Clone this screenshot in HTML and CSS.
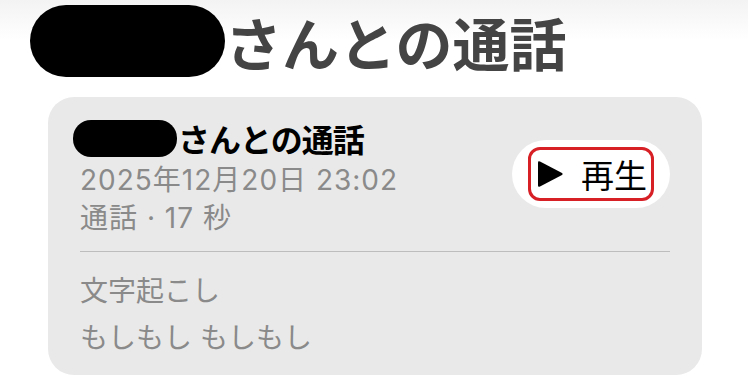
FILE: index.html
```html
<!DOCTYPE html>
<html lang="ja">
<head>
<meta charset="utf-8">
<link rel="stylesheet" href="styles.css">
</head>
<body>
<div class="page">
  <h1 class="title"><span class="redact big"></span><span>さんとの通話</span></h1>
  <section class="card">
    <div class="head">
      <div class="info">
        <div class="name"><span class="redact small"></span><span>さんとの通話</span></div>
        <div class="sub">2025年12月20日 23:02</div>
        <div class="sub">通話 · 17 秒</div>
      </div>
      <div class="play-wrap">
        <button class="play">
          <svg class="tri" width="27" height="28" viewBox="0 0 27 28"><path d="M3 1.5 Q1 0.5 1 2.5 V25.5 Q1 27.5 3 26.5 L25 15 Q26.5 14 25 13 Z" fill="#000"/></svg>
          <span>再生</span>
        </button>
      </div>
    </div>
    <div class="divider"></div>
    <div class="sub plain">文字起こし</div>
    <div class="sub plain">もしもし もしもし</div>
  </section>
</div>
</body>
</html>
```
FILE: styles.css
```css
html, body {
  margin: 0;
  padding: 0;
  background: #fff;
  font-family: "Noto Sans CJK JP", "Noto Sans", sans-serif;
}
.page {
  width: 748px;
  height: 381px;
  overflow: hidden;
  background: linear-gradient(180deg, #f3f3f3 0px, #ffffff 40px);
}
.title {
  margin: 0;
  padding: 5px 0 0 30px;
  display: flex;
  align-items: center;
  font-size: 57px;
  font-weight: 700;
  color: #444;
  line-height: 72px;
  height: 72px;
}
.redact {
  display: inline-block;
  background: #000;
}
.redact.big {
  width: 195px;
  height: 72px;
  border-radius: 36px;
  margin-right: 0;
}
.redact.small {
  width: 104px;
  height: 37px;
  border-radius: 18px;
  margin: 0 1px 0 -7px;
}
.card {
  margin: 20px 0 0 48px;
  width: 654px;
  height: 278px;
  box-sizing: border-box;
  background: #e9e9e9;
  border-radius: 26px;
  padding: 22px 32px 0 32px;
}
.head {
  display: flex;
  justify-content: space-between;
  align-items: flex-start;
}
.name {
  display: flex;
  align-items: center;
  font-size: 32px;
  letter-spacing: -1px;
  font-weight: 700;
  color: #000;
  height: 38px;
  line-height: 38px;
  margin-bottom: 4px;
}
.sub {
  font-family: "Inter", "Noto Sans CJK JP", sans-serif;
  font-size: 28px;
  letter-spacing: 1px;
  color: #8a8a8a;
  line-height: 38px;
  height: 38px;
}
.play-wrap {
  margin-top: 21px;
  background: #fff;
  border-radius: 34px;
  width: 158px;
  height: 68px;
  display: flex;
  align-items: center;
  justify-content: center;
}
.play {
  box-sizing: border-box;
  width: 126px;
  height: 54px;
  border: 3px solid #d71f26;
  border-radius: 12px;
  background: transparent;
  display: flex;
  align-items: center;
  padding: 0 0 0 6px;
  gap: 17px;
  font-family: inherit;
  font-size: 33px;
  color: #000;
}
.play span {
  line-height: 1;
}
.divider {
  height: 1px;
  background: #bdbdbd;
  margin: 14px 0 16px 0;
}
.sub.plain {
  letter-spacing: 0;
  line-height: 47px;
  height: 47px;
}
```
